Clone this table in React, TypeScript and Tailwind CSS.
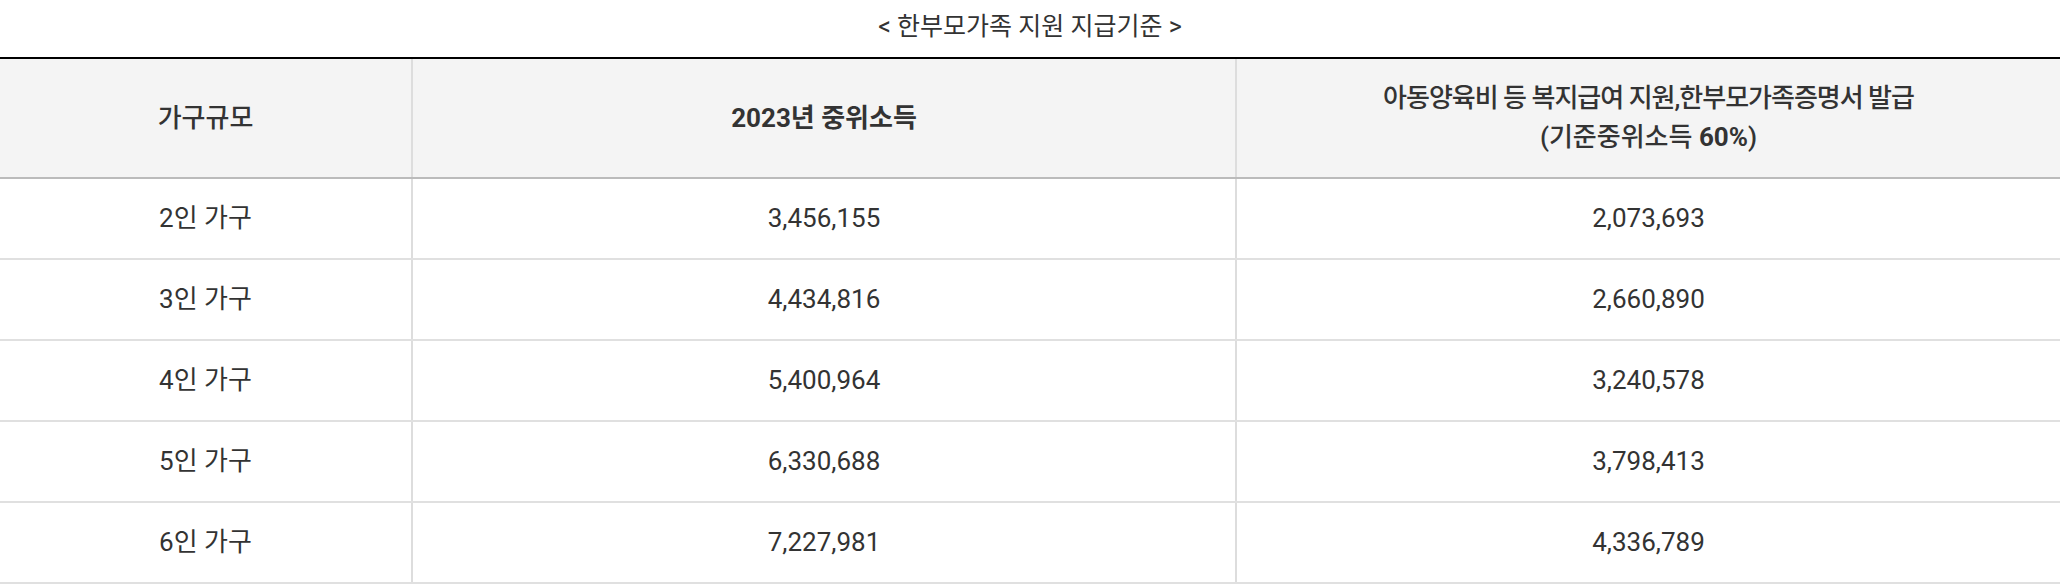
import React from "react";

const rows = [
  ["2인 가구", "3,456,155", "2,073,693"],
  ["3인 가구", "4,434,816", "2,660,890"],
  ["4인 가구", "5,400,964", "3,240,578"],
  ["5인 가구", "6,330,688", "3,798,413"],
  ["6인 가구", "7,227,981", "4,336,789"],
];

export default function App() {
  return (
    <div
      className="w-[2060px] bg-white text-[#333]"
      style={{ fontFamily: 'Roboto, "Noto Sans CJK KR", sans-serif' }}
    >
      <div className="pt-[9px] mb-[12px] text-center text-[25px] leading-[36px]">
        &lt; 한부모가족 지원 지급기준 &gt;
      </div>
      <div className="border-t-2 border-black">
        <div className="flex bg-[#f4f4f4] border-b-2 border-[#bbbbbb] h-[120px] text-[26px] leading-[39px]">
          <div className="w-[411px] flex items-center justify-center font-medium">가구규모</div>
          <div className="w-[824px] border-l-2 border-[#dddddd] flex items-center justify-center font-bold">
            2023년 중위소득
          </div>
          <div className="flex-1 border-l-2 border-[#dddddd] flex flex-col items-center justify-center font-medium text-center">
            <div className="w-full text-center tracking-[-1px]">아동양육비 등 복지급여 지원,한부모가족증명서 발급</div>
            <div className="w-full text-center">
              (기준중위소득 <span className="font-bold">60%</span>)
            </div>
          </div>
        </div>
        {rows.map((r) => (
          <div
            key={r[0]}
            className="flex border-b-2 border-[#e0e0e0] h-[81px] text-[26px] leading-[39px]"
          >
            <div className="w-[411px] flex items-center justify-center">{r[0]}</div>
            <div className="w-[824px] border-l-2 border-[#dddddd] flex items-center justify-center">{r[1]}</div>
            <div className="flex-1 border-l-2 border-[#dddddd] flex items-center justify-center">{r[2]}</div>
          </div>
        ))}
      </div>
    </div>
  );
}
